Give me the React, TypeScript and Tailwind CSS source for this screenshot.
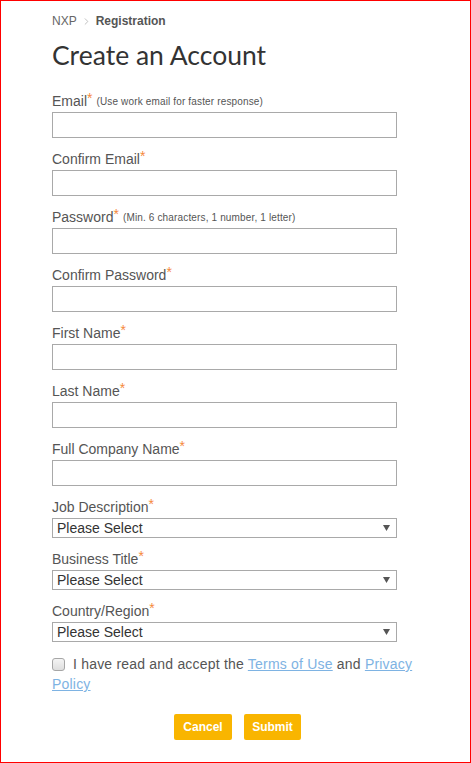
import { ChevronRight } from 'lucide-react'

const textFields = [
  { label: 'Email', hint: '(Use work email for faster response)' },
  { label: 'Confirm Email' },
  { label: 'Password', hint: '(Min. 6 characters, 1 number, 1 letter)' },
  { label: 'Confirm Password' },
  { label: 'First Name' },
  { label: 'Last Name' },
  { label: 'Full Company Name' },
]

const selectFields = ['Job Description', 'Business Title', 'Country/Region']

function Label({ text, hint }: { text: string; hint?: string }) {
  return (
    <div className="flex h-[20px] items-center text-[14px] leading-[20px] text-[#555]">
      <span>{text}</span>
      <span className="-mt-[7px] text-[14px] leading-none text-[#f58a3c]">*</span>
      {hint ? <span className="ml-[4px] mt-[2px] text-[10px] tracking-[0.15px] text-[#555]">{hint}</span> : null}
    </div>
  )
}

export default function App() {
  return (
    <div className="h-[763px] w-[471px] border border-[#ff0000] bg-white font-['Liberation_Sans',Arial,sans-serif]">
      <div className="pl-[51px] pt-[12px]">
        <nav className="flex h-[16px] items-center text-[12px] text-[#666]">
          <span>NXP</span>
          <ChevronRight className="mx-[4px] h-[11px] w-[11px] text-[#bbb]" strokeWidth={2} />
          <span className="font-bold text-[#555]">Registration</span>
        </nav>

        <h1 className="mt-[10px] h-[32px] font-['Lato',sans-serif] text-[26.5px] font-normal leading-[32px] text-[#333]">
          Create an Account
        </h1>

        <form className="mt-[20px] w-[345px]" onSubmit={(e) => e.preventDefault()}>
          {textFields.map((f) => (
            <div key={f.label} className="mb-[11px]">
              <Label text={f.label} hint={f.hint} />
              <input
                type="text"
                className="mt-px block h-[26px] w-full border border-[#a9a9a9] bg-white px-1 text-[14px] outline-none"
              />
            </div>
          ))}

          {selectFields.map((s) => (
            <div key={s} className="mb-[11px]">
              <Label text={s} />
              <div className="relative mt-px">
                <select className="block h-[20px] w-full appearance-none rounded-none border border-[#a9a9a9] bg-white pl-[4px] text-[14px] leading-[18px] text-[#333] outline-none">
                  <option>Please Select</option>
                </select>
                <svg
                  className="pointer-events-none absolute right-[7px] top-[7px]"
                  width="7"
                  height="6"
                  viewBox="0 0 7 6"
                >
                  <path d="M0 0h7L3.5 6z" fill="#555" />
                </svg>
              </div>
            </div>
          ))}

          <div className="mt-[12px] w-[370px] text-[14px] leading-[20px] tracking-[0.2px] text-[#555]">
            <span className="mr-[8px] inline-block h-[13px] w-[13px] translate-y-[1px] rounded-[3px] border border-[#a6a6a6] bg-gradient-to-b from-[#f4f4f4] to-[#dedede] align-[-1px]" />
            I have read and accept the{' '}
            <a href="#" className="text-[#7eb3e3] underline">
              Terms of Use
            </a>{' '}
            and{' '}
            <a href="#" className="text-[#7eb3e3] underline">
              Privacy Policy
            </a>
          </div>

          <div className="mt-[20px] flex gap-[12px] pl-[122px]">
            <button
              type="button"
              className="h-[26px] w-[58px] rounded-[2px] bg-[#f9b500] text-[12px] font-bold text-white"
            >
              Cancel
            </button>
            <button
              type="submit"
              className="h-[26px] w-[57px] rounded-[2px] bg-[#f9b500] text-[12px] font-bold text-white"
            >
              Submit
            </button>
          </div>
        </form>
      </div>
    </div>
  )
}
